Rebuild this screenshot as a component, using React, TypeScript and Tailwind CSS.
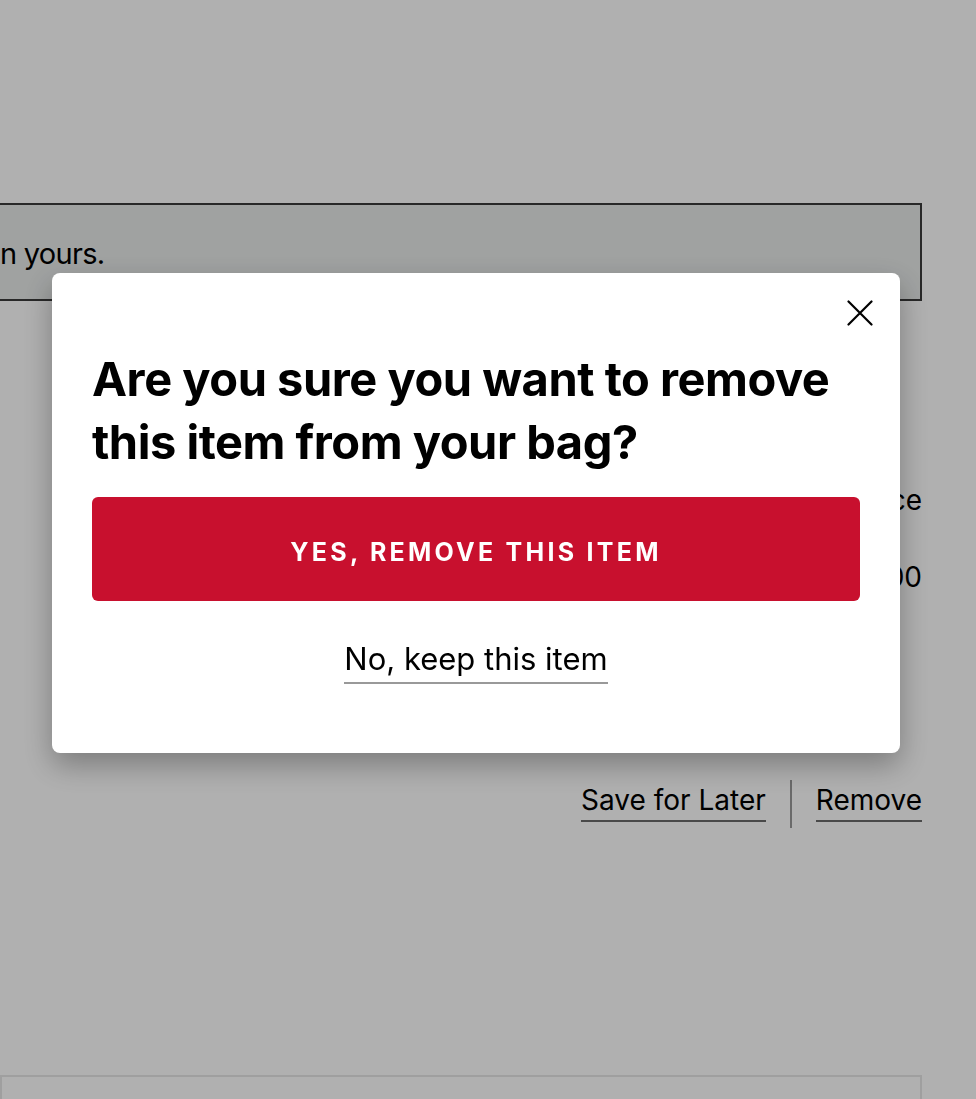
function Underlined({ children }: { children: React.ReactNode }) {
  return (
    <span className="border-b-2 border-[#6a6a6a] pb-[6px] leading-none">
      {children}
    </span>
  );
}

function BagPage() {
  return (
    <div className="min-h-[1099px] overflow-hidden bg-white text-black">
      <div className="h-[10px] bg-white" />
      <div className="mr-[54px] pt-[193px]">
        <div className="-ml-[2px] flex h-[98px] items-center overflow-hidden border-2 border-[#3a3a3a] bg-[#e8ebea]">
          <span className="whitespace-nowrap pt-[4px] text-[29px] tracking-tight">n yours.</span>
        </div>

        <div className="flex flex-col items-end pt-[178px] text-[28px]">
          <span>Price</span>
          <span className="mt-[35px]">$120.00</span>
        </div>

        <div className="mt-[182px] flex items-center justify-end text-[28px]">
          <Underlined>Save for Later</Underlined>
          <div className="mx-[24px] h-[48px] w-[2px] bg-[#9a9a9a]" />
          <Underlined>Remove</Underlined>
        </div>

        <div className="mt-[247px] h-[40px] border-2 border-[#e6e6e6]" />
      </div>
    </div>
  );
}

function RemoveDialog() {
  return (
    <div className="fixed inset-0 bg-black/[0.31] pl-[52px] pt-[273px]">
      <div className="relative w-[848px] rounded-lg bg-white px-[40px] pb-[69px] pt-[74px] shadow-[0_12px_30px_rgba(0,0,0,0.3)]">
        <button className="absolute right-[27px] top-[27px] text-black">
          <svg width="26" height="26" viewBox="0 0 26 26" fill="none" stroke="currentColor" strokeWidth="2.2" strokeLinecap="round">
            <path d="M1.5 1.5 L24.5 24.5 M24.5 1.5 L1.5 24.5" />
          </svg>
        </button>
        <h2 className="text-[47px] font-bold leading-[63px] tracking-[-0.01em]">
          Are you sure you want to remove this item from your bag?
        </h2>
        <button className="mt-[24px] flex h-[104px] w-full items-center justify-center rounded-[6px] bg-[#c8102e] pt-[8px] text-[25px] font-bold tracking-[0.13em] text-white">
          YES, REMOVE THIS ITEM
        </button>
        <div className="mt-[42px] flex justify-center">
          <span className="border-b-2 border-[#999] pb-[8px] text-[31px] leading-none">
            No, keep this item
          </span>
        </div>
      </div>
    </div>
  );
}

export default function App() {
  return (
    <div className="relative font-['Inter',sans-serif]">
      <BagPage />
      <RemoveDialog />
    </div>
  );
}
